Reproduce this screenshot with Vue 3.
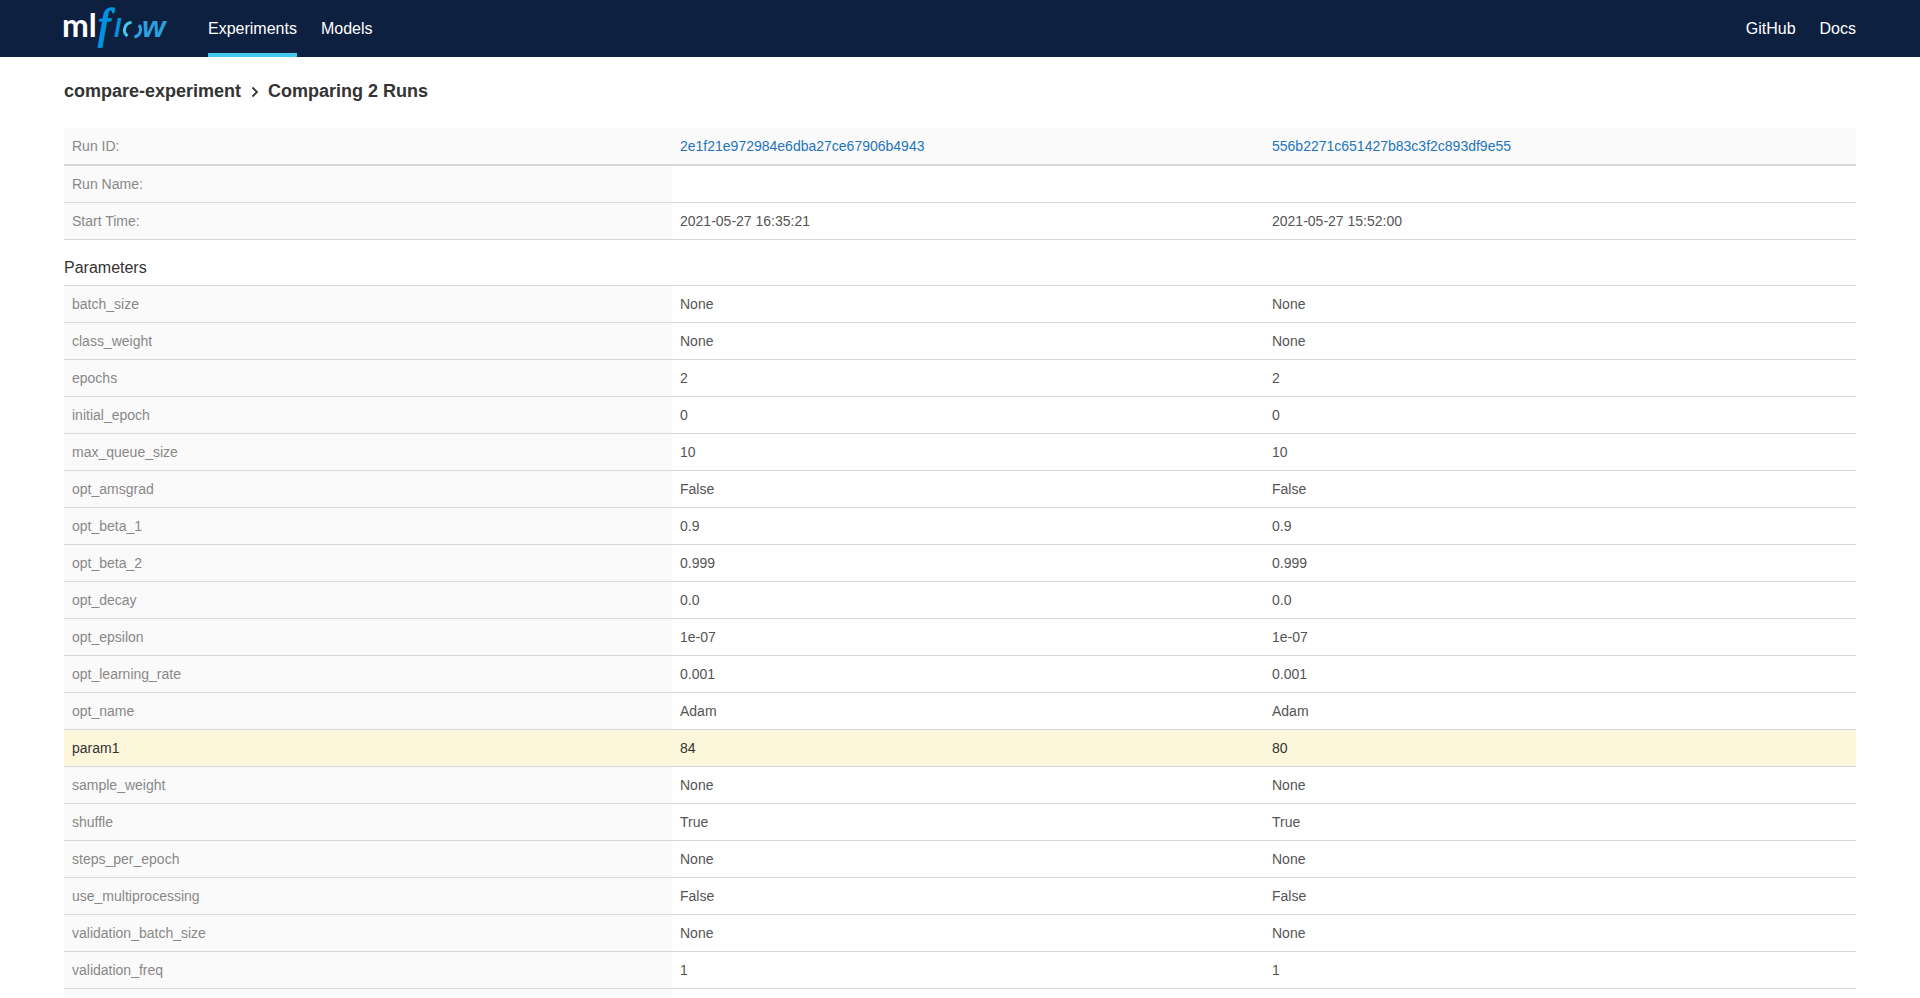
<script setup>
const runs = [
  { id: '2e1f21e972984e6dba27ce67906b4943', start: '2021-05-27 16:35:21' },
  { id: '556b2271c651427b83c3f2c893df9e55', start: '2021-05-27 15:52:00' }
]

const params = [
  ['batch_size', 'None', 'None'],
  ['class_weight', 'None', 'None'],
  ['epochs', '2', '2'],
  ['initial_epoch', '0', '0'],
  ['max_queue_size', '10', '10'],
  ['opt_amsgrad', 'False', 'False'],
  ['opt_beta_1', '0.9', '0.9'],
  ['opt_beta_2', '0.999', '0.999'],
  ['opt_decay', '0.0', '0.0'],
  ['opt_epsilon', '1e-07', '1e-07'],
  ['opt_learning_rate', '0.001', '0.001'],
  ['opt_name', 'Adam', 'Adam'],
  ['param1', '84', '80'],
  ['sample_weight', 'None', 'None'],
  ['shuffle', 'True', 'True'],
  ['steps_per_epoch', 'None', 'None'],
  ['use_multiprocessing', 'False', 'False'],
  ['validation_batch_size', 'None', 'None'],
  ['validation_freq', '1', '1'],
  // row that only starts at the bottom edge of the window
  ['', '', '']
]
</script>

<template>
  <div class="page">
    <header class="navbar">
      <svg class="logo" width="108" height="57" viewBox="-2 0 108 57" xmlns="http://www.w3.org/2000/svg">
        <text x="-2" y="37" class="logo-ml">ml</text>
        <text x="34" y="38" class="logo-f">f</text>
        <text x="50" y="37" class="logo-l">l</text>
        <path d="M63.500 36a7.500 7.500 0 0 1 4-13.500" fill="none" stroke="#43c9ed" stroke-width="3" />
        <path d="M75 25a7.500 7.500 0 0 1-4.500 12" fill="none" stroke="#2c9fdc" stroke-width="3" />
        <text x="78" y="37" class="logo-w">w</text>
      </svg>
      <nav class="nav-left">
        <a class="nav-item active">Experiments</a>
        <a class="nav-item">Models</a>
      </nav>
      <nav class="nav-right">
        <a class="nav-item">GitHub</a>
        <a class="nav-item">Docs</a>
      </nav>
    </header>

    <main class="content">
      <h1 class="breadcrumb">
        <span>compare-experiment</span>
        <svg class="chevron" width="9" height="12" viewBox="0 0 9 12" xmlns="http://www.w3.org/2000/svg">
          <path d="M2.500 1.500 7 6l-4.500 4.500" fill="none" stroke="#333" stroke-width="1.800" />
        </svg>
        <span>Comparing 2 Runs</span>
      </h1>

      <table class="compare-table">
        <colgroup>
          <col class="col-label" />
          <col />
          <col />
        </colgroup>
        <tbody>
          <tr class="head-row">
            <th>Run ID:</th>
            <td v-for="run in runs" :key="run.id"><a class="run-link">{{ run.id }}</a></td>
          </tr>
          <tr>
            <th>Run Name:</th>
            <td v-for="run in runs" :key="run.id"></td>
          </tr>
          <tr>
            <th>Start Time:</th>
            <td v-for="run in runs" :key="run.id">{{ run.start }}</td>
          </tr>
        </tbody>
      </table>

      <h2 class="section-title">Parameters</h2>

      <table class="compare-table params">
        <colgroup>
          <col class="col-label" />
          <col />
          <col />
        </colgroup>
        <tbody>
          <tr v-for="row in params" :key="row[0]" :class="{ 'diff-row': row[1] !== row[2] }">
            <th>{{ row[0] }}</th>
            <td>{{ row[1] }}</td>
            <td>{{ row[2] }}</td>
          </tr>
        </tbody>
      </table>
    </main>
  </div>
</template>

<style>
html,
body {
  margin: 0;
  overflow: hidden;
  background: #fff;
}
</style>

<style scoped>
.page {
  font-family: "Liberation Sans", Arial, sans-serif;
  font-size: 14px;
  color: #333;
}

.navbar {
  display: flex;
  align-items: stretch;
  height: 57px;
  padding: 0 64px;
  background: #0e2040;
}

.logo {
  flex: none;
  margin-left: -2px;
  margin-right: 38px;
}

.logo-ml {
  font-family: Lato, sans-serif;
  font-size: 32px;
  font-weight: 700;
  fill: #fff;
}

.logo-f {
  font-family: "Liberation Serif", serif;
  font-style: italic;
  font-size: 42px;
  fill: #0194e2;
  stroke: #0194e2;
  stroke-width: 1.4px;
}

.logo-l {
  font-family: "Liberation Sans", sans-serif;
  font-style: italic;
  font-weight: 700;
  font-size: 25px;
  fill: #0a8fdb;
}

.logo-w {
  font-family: "Liberation Sans", sans-serif;
  font-style: italic;
  font-weight: 700;
  font-size: 30px;
  fill: #2c9fdc;
}

.nav-left,
.nav-right {
  display: flex;
  gap: 24px;
}

.nav-right {
  margin-left: auto;
}

.nav-item {
  display: flex;
  align-items: center;
  height: 57px;
  box-sizing: border-box;
  font-size: 16px;
  color: #fff;
}

.nav-item.active {
  border-bottom: 4px solid #43c9ed;
  padding-top: 4px;
}

.content {
  padding: 0 64px;
}

.breadcrumb {
  display: flex;
  align-items: center;
  gap: 9px;
  height: 69px;
  padding-bottom: 2px;
  margin: 0;
  font-size: 18px;
  font-weight: 700;
  color: #333;
}

.compare-table {
  width: 100%;
  table-layout: fixed;
  border-collapse: collapse;
}

.col-label {
  width: 608px;
}

.compare-table th,
.compare-table td {
  height: 36px;
  padding: 0 8px;
  box-sizing: content-box;
  border-bottom: 1px solid #d8d8d8;
  font-size: 14px;
  font-weight: 400;
  text-align: left;
  color: #555;
}

.compare-table th {
  background: #fafafa;
  color: #888;
}

.head-row th,
.head-row td {
  background: #fafafa;
  border-bottom: 2px solid #d8d8d8;
}

.run-link {
  color: #2374bb;
}

.section-title {
  display: flex;
  align-items: flex-end;
  height: 38px;
  margin: 0;
  padding-bottom: 7px;
  border-bottom: 1px solid #d8d8d8;
  font-size: 16px;
  font-weight: 400;
  line-height: 20px;
  color: #333;
}

.diff-row th,
.diff-row td {
  background: #fcf6db;
  color: #333;
}
</style>
